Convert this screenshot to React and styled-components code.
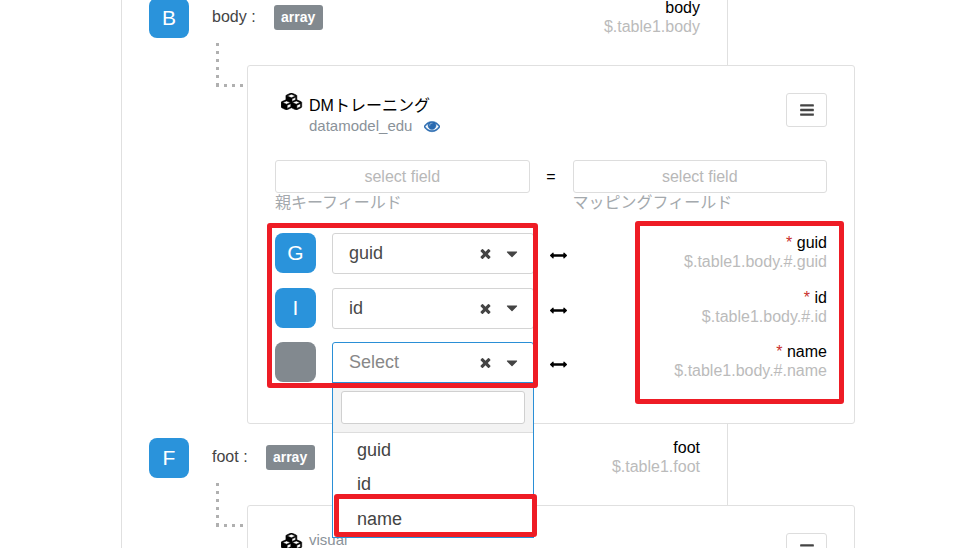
import React from "react";
import styled, { createGlobalStyle } from "styled-components";

const GlobalStyle = createGlobalStyle`
  *, *::before, *::after { box-sizing: border-box; }
  body {
    margin: 0;
    background: #fff;
    color: #000;
    font: 16px/19px "Liberation Sans", Arial, "Noto Sans CJK JP", sans-serif;
  }
  button, input, select { font: inherit; color: inherit; }
`;

const Viewport = styled.main`
  height: 100vh;
  overflow: hidden;
`;

const Panel = styled.section`
  margin: -2px 239px 0 121px;
  border: solid #e0e0e0;
  border-width: 0 1px;
`;

const Node = styled.article`
  display: grid;
  grid-template-columns: 125px minmax(0, 1fr);
  grid-template-rows: 45px 22px auto;
  margin-bottom: 14px;
`;

const NodeHeader = styled.header`
  grid-column: 1 / -1;
  display: flex;
  align-items: flex-start;
  padding: 0 27px;
`;

const Tile = styled.span`
  flex: none;
  display: flex;
  align-items: center;
  justify-content: center;
  width: ${(p) => (p.$wide ? 41 : 40)}px;
  height: 40px;
  padding-bottom: 1px;
  border-radius: 8px;
  background: ${(p) => (p.$empty ? "#82898f" : "#2a93db")};
  color: #fff;
  font-size: 21px;
`;

const NodeName = styled.span`
  margin: 9px 18px 0 23px;
  color: #444;
`;

const TypeBadge = styled.span`
  min-width: 49px;
  margin-top: 7px;
  padding: 0 7px;
  border-radius: 3px;
  background: #82898f;
  color: #fff;
  font-size: 14px;
  font-weight: bold;
  line-height: 25px;
  text-align: center;
`;

const Target = styled.div`
  margin-left: auto;
  text-align: right;
`;

const TargetPath = styled.div`
  color: #bbb;
`;

const Required = styled.span`
  color: #c9302c;
`;

const Connector = styled.div`
  grid-column: 1;
  grid-row: 2 / 4;
  height: 44px;
  margin-left: 94px;
  background:
    repeating-linear-gradient(to bottom, #b0b0b0 0 3px, transparent 3px 8px) left top / 3px 100% no-repeat,
    repeating-linear-gradient(to right, #b0b0b0 0 3px, transparent 3px 8px) left 41px / 100% 3px no-repeat;
`;

const Card = styled.section`
  grid-column: 2;
  grid-row: 3;
  margin-right: -128px;
  padding: 27px 27px 40px;
  border: 1px solid #e0e0e0;
  border-radius: 3px;
  background: #fff;
`;

const CardHeader = styled.header`
  display: flex;
  align-items: flex-start;
  height: 34px;
  padding-left: 6px;
`;

const CardTitle = styled.div`
  margin-left: 6px;
`;

const ModelName = styled.div`
  line-height: 26px;
`;

const ModelId = styled.div`
  display: flex;
  align-items: center;
  gap: 12px;
  height: 14px;
  line-height: 14px;
  color: #8a9299;
  font-size: 15px;
`;

const IconButton = styled.button`
  display: flex;
  padding: 0;
  border: 0;
  background: none;
  color: ${(p) => p.$color || "#444"};
  cursor: pointer;
`;

const MenuButton = styled.button`
  display: flex;
  align-items: center;
  justify-content: center;
  width: 41px;
  height: 34px;
  margin-left: auto;
  padding: 0;
  border: 1px solid #ddd;
  border-radius: 3px;
  background: #fff;
  color: #444;
`;

const KeyRow = styled.div`
  display: grid;
  grid-template-columns: 1fr 43px 1fr;
  margin-top: 33px;
`;

const Equals = styled.span`
  line-height: 33px;
  text-align: center;
`;

const Field = styled.div`
  display: flex;
  flex-direction: column;
`;

const FieldInput = styled.input`
  width: 100%;
  height: 33px;
  border: 1px solid #ddd;
  border-radius: 3px;
  background: #fff;
  text-align: center;
  &::placeholder { color: #b8b8b8; opacity: 1; }
`;

const FieldLabel = styled.label`
  color: #a4a9ad;
`;

const Mappings = styled.div`
  position: relative;
  display: flex;
  flex-direction: column;
  justify-content: space-between;
  min-height: 150px;
  margin-top: 21px;
`;

const MappingRow = styled.div`
  display: grid;
  grid-template-columns: 41px minmax(160px, 202px) 17px 1fr;
  column-gap: 16px;
  height: 41px;
`;

const ArrowCell = styled.span`
  display: flex;
  align-items: center;
  padding-top: 4px;
`;

const Combo = styled.div`
  position: relative;
  display: flex;
  align-items: center;
  height: 41px;
  padding: 0 12px 0 16px;
  border: 1px solid ${(p) => (p.$open ? "#2a8fd6" : "#d4d4d4")};
  border-radius: ${(p) => (p.$open ? "3px 3px 0 0" : "3px")};
  background: #fff;
  color: ${(p) => (p.$open ? "#888" : "#4a4a4a")};
  font-size: 18px;
`;

const ComboSelect = styled.select`
  flex: 1;
  min-width: 0;
  height: 39px;
  padding: 0;
  border: 0;
  outline: 0;
  background: none;
  appearance: none;
`;

const Caret = styled.span`
  display: flex;
  margin-left: 10px;
  color: #444;
  pointer-events: none;
`;

const Dropdown = styled.div`
  position: absolute;
  z-index: 1;
  top: 39px;
  left: -1px;
  right: -1px;
  border: 1px solid #2a8fd6;
  background: #fff;
  color: #444;
`;

const SearchBox = styled.div`
  padding: 8px;
  border-bottom: 1px solid #ddd;
  background: #f3f3f3;
`;

const SearchInput = styled.input`
  display: block;
  width: 100%;
  height: 33px;
  border: 1px solid #d0d0d0;
  border-radius: 3px;
  background: #fff;
`;

const Options = styled.div`
  display: grid;
  grid-auto-rows: 1fr;
  min-height: 104px;
`;

const Option = styled.button`
  padding: 0 24px;
  border: 0;
  background: none;
  text-align: left;
`;

const Highlight = styled.div`
  position: absolute;
  z-index: 2;
  border: 5px solid #ee1c25;
  border-radius: 3px;
  pointer-events: none;
`;

const SourceHighlight = styled(Highlight)`
  top: -10px;
  bottom: -5px;
  left: -8px;
  width: 271px;
`;

const TargetHighlight = styled(Highlight)`
  top: -12px;
  right: -17px;
  bottom: -21px;
  width: 209px;
`;

const OptionHighlight = styled(Highlight)`
  left: 1px;
  right: -4px;
  bottom: 0;
  height: 43px;
`;

const ICONS = {
  cubes: [2304, "M640 1632l384-192v-314l-384 164v342zm-64-454l404-173-404-173-404 173zm1088 454l384-192v-314l-384 164v342zm-64-454l404-173-404-173-404 173zm-448-293l384-165v-266l-384 164v267zm-64-379l441-189-441-189-441 189zm1088 518v416q0 36-19 67t-52 47l-448 224q-25 14-57 14t-57-14l-448-224q-4-2-7-4-2 2-7 4l-448 224q-25 14-57 14t-57-14l-448-224q-33-16-52-47t-19-67v-416q0-38 21.5-70t56.5-48l434-186v-400q0-38 21.5-70t56.5-48l448-192q23-10 50-10t50 10l448 192q35 16 56.5 48t21.5 70v400l434 186q36 16 57 48t21 70z"],
  eye: [1792, "M1664 960q-152-236-381-353 61 104 61 225 0 185-131.5 316.5t-316.5 131.5-316.5-131.5-131.5-316.5q0-121 61-225-229 117-381 353 133 205 333.5 326.5t434.5 121.5 434.5-121.5 333.5-326.5zm-720-384q0-20-14-34t-34-14q-125 0-214.5 89.5t-89.5 214.5q0 20 14 34t34 14 34-14 14-34q0-86 61-147t147-61q20 0 34-14t14-34zm848 384q0 34-20 69-140 230-376.5 368.5t-499.5 138.5-499.5-139-376.5-368q-20-35-20-69t20-69q140-229 376.5-368t499.5-139 499.5 139 376.5 368q20 35 20 69z"],
  bars: [1792, "M1664 1344v128q0 26-19 45t-45 19h-1408q-26 0-45-19t-19-45v-128q0-26 19-45t45-19h1408q26 0 45 19t19 45zm0-512v128q0 26-19 45t-45 19h-1408q-26 0-45-19t-19-45v-128q0-26 19-45t45-19h1408q26 0 45 19t19 45zm0-512v128q0 26-19 45t-45 19h-1408q-26 0-45-19t-19-45v-128q0-26 19-45t45-19h1408q26 0 45 19t19 45z"],
  times: [1792, "M1490 1322q0 40-28 68l-136 136q-28 28-68 28t-68-28l-294-294-294 294q-28 28-68 28t-68-28l-136-136q-28-28-28-68t28-68l294-294-294-294q-28-28-28-68t28-68l136-136q28-28 68-28t68 28l294 294 294-294q28-28 68-28t68 28l136 136q28 28 28 68t-28 68l-294 294 294 294q28 28 28 68z"],
  caret: [1792, "M1408 704q0 26-19 45l-448 448q-19 19-45 19t-45-19l-448-448q-19-19-19-45t19-45 45-19h896q26 0 45 19t19 45z"],
  arrows: [1792, "M1792 896q0 26-19 45l-256 256q-19 19-45 19t-45-19-19-45v-128h-1024v128q0 26-19 45t-45 19-45-19l-256-256q-19-19-19-45t19-45l256-256q19-19 45-19t45 19 19 45v128h1024v-128q0-26 19-45t45-19 45 19l256 256q19 19 19 45z"],
};

function Icon({ name, size, stroke = 0 }) {
  const [width, path] = ICONS[name];
  return (
    <svg
      height={size}
      width={Math.round((size * width) / 1792)}
      viewBox={`0 0 ${width} 1792`}
      fill="currentColor"
      stroke="currentColor"
      strokeWidth={stroke}
      aria-hidden="true"
    >
      <path d={path} />
    </svg>
  );
}

const FIELDS = ["guid", "id", "name"];

function FieldCombo({ target, value, open }) {
  return (
    <Combo $open={open}>
      <ComboSelect aria-label={`Source for ${target}`} defaultValue={value}>
        <option value="">Select</option>
        {FIELDS.map((f) => <option key={f} value={f}>{f}</option>)}
      </ComboSelect>
      <IconButton type="button" aria-label="Clear"><Icon name="times" size={15} /></IconButton>
      <Caret><Icon name="caret" size={18} /></Caret>
      {open && (
        <Dropdown>
          <SearchBox><SearchInput type="text" aria-label="Search fields" /></SearchBox>
          <Options role="listbox" aria-label="Fields">
            {FIELDS.map((f) => <Option key={f} type="button" role="option">{f}</Option>)}
          </Options>
          <OptionHighlight />
        </Dropdown>
      )}
    </Combo>
  );
}

function KeyField({ id, label }) {
  return (
    <Field>
      <FieldInput id={id} type="text" placeholder="select field" />
      <FieldLabel htmlFor={id}>{label}</FieldLabel>
    </Field>
  );
}

function TreeNode({ name, children }) {
  return (
    <Node>
      <NodeHeader>
        <Tile>{name[0].toUpperCase()}</Tile>
        <NodeName>{name} :</NodeName>
        <TypeBadge>array</TypeBadge>
        <Target>
          <div>{name}</div>
          <TargetPath>$.table1.{name}</TargetPath>
        </Target>
      </NodeHeader>
      <Connector />
      <Card>{children}</Card>
    </Node>
  );
}

const MAPPINGS = [
  { target: "guid", value: "guid" },
  { target: "id", value: "id" },
  { target: "name", value: "", open: true },
];

export default function App() {
  return (
    <Viewport>
      <GlobalStyle />
      <Panel>
        <TreeNode name="body">
          <CardHeader>
            <Icon name="cubes" size={17} stroke={60} />
            <CardTitle>
              <ModelName>DMトレーニング</ModelName>
              <ModelId>
                datamodel_edu
                <IconButton type="button" aria-label="Preview" $color="#2a6ab0"><Icon name="eye" size={16} stroke={60} /></IconButton>
              </ModelId>
            </CardTitle>
            <MenuButton type="button" aria-label="Menu"><Icon name="bars" size={16} /></MenuButton>
          </CardHeader>
          <KeyRow>
            <KeyField id="parent-key" label="親キーフィールド" />
            <Equals>=</Equals>
            <KeyField id="mapping-field" label="マッピングフィールド" />
          </KeyRow>
          <Mappings>
            {MAPPINGS.map((m) => (
              <MappingRow key={m.target}>
                <Tile $wide $empty={!m.value}>{m.value.charAt(0).toUpperCase()}</Tile>
                <FieldCombo {...m} />
                <ArrowCell><Icon name="arrows" size={17} /></ArrowCell>
                <Target>
                  <div><Required>*</Required> {m.target}</div>
                  <TargetPath>$.table1.body.#.{m.target}</TargetPath>
                </Target>
              </MappingRow>
            ))}
            <SourceHighlight />
            <TargetHighlight />
          </Mappings>
        </TreeNode>
        <TreeNode name="foot">
          <CardHeader>
            <Icon name="cubes" size={17} stroke={60} />
            <CardTitle><ModelId>visual</ModelId></CardTitle>
            <MenuButton type="button" aria-label="Menu"><Icon name="bars" size={16} /></MenuButton>
          </CardHeader>
        </TreeNode>
      </Panel>
    </Viewport>
  );
}
